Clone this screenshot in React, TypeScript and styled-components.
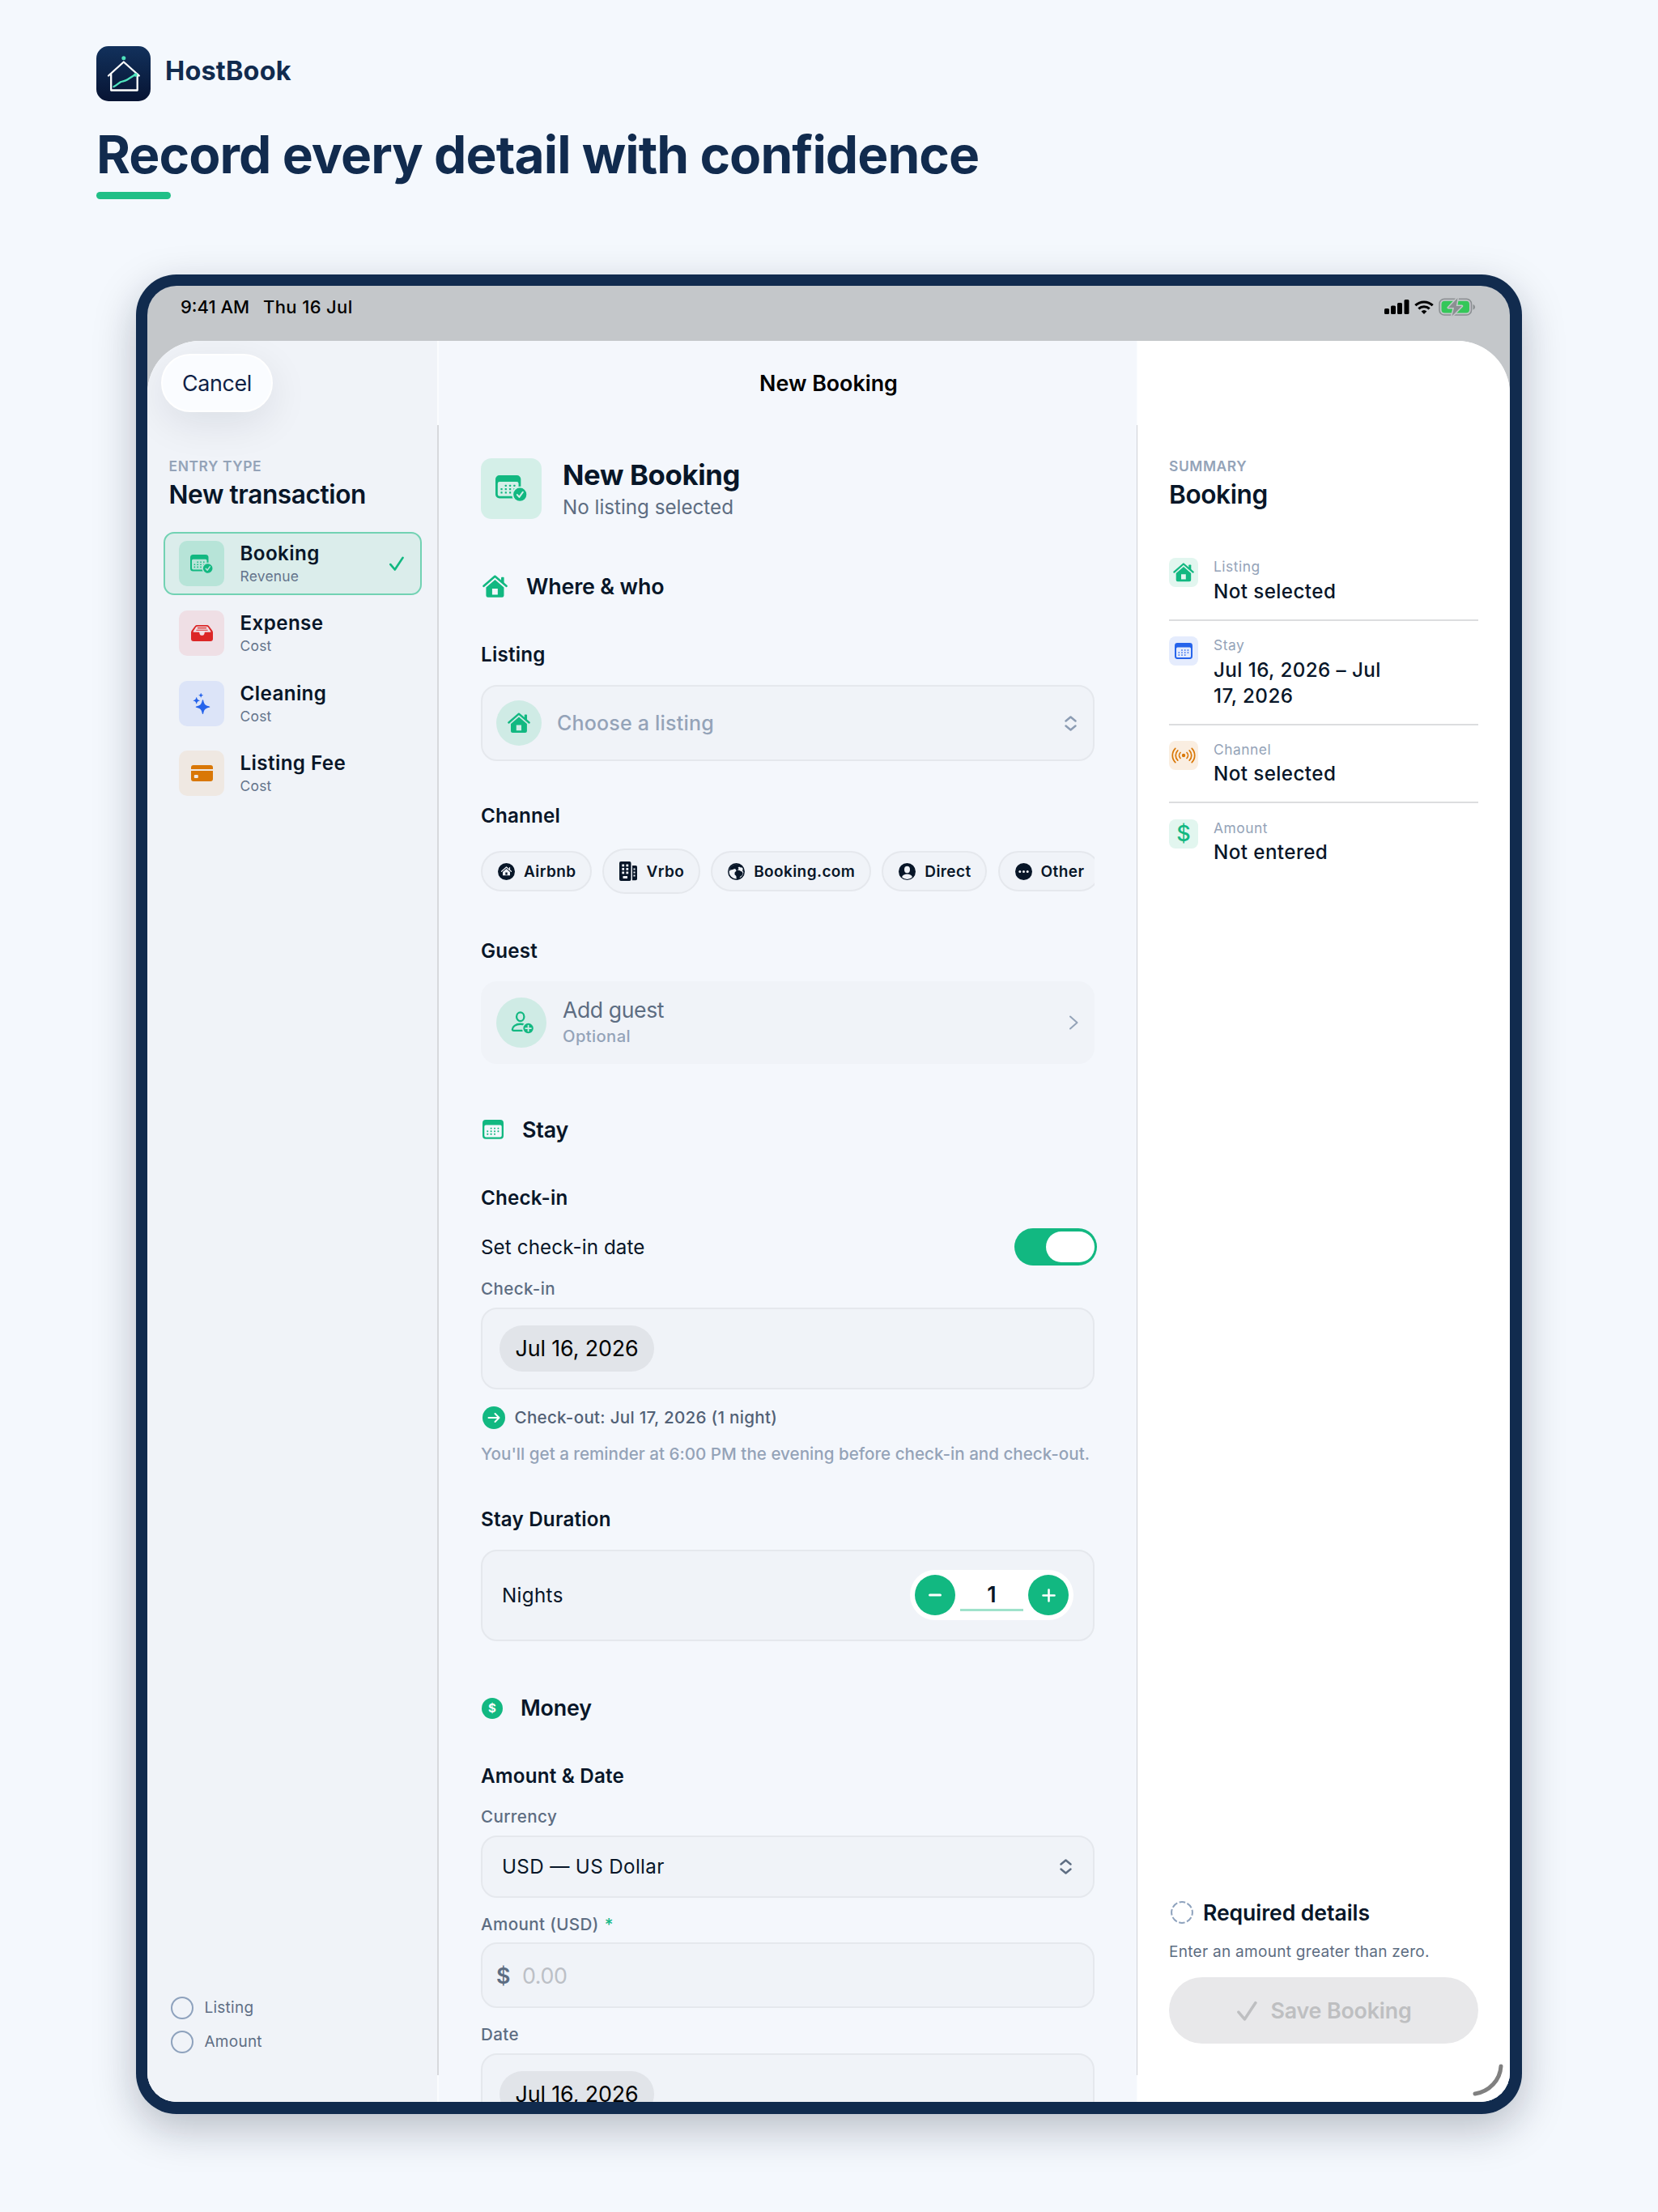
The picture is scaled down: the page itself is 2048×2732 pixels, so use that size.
import { useState } from 'react';
import styled, { createGlobalStyle } from 'styled-components';

const GlobalStyle = createGlobalStyle`
  * {
    box-sizing: border-box;
  }

  body {
    margin: 0;
    background: #f4f8fd;
    color: #081628;
    font-family: Inter, "Liberation Sans", sans-serif;
  }

  svg {
    display: block;
    flex-shrink: 0;
  }
`;

const Page = styled.div`
  width: 2048px;
  height: 2732px;
  padding: 57px 168px 0 119px;
  overflow: hidden;
`;

const Brand = styled.div`
  display: flex;
  align-items: center;
  gap: 18px;
  height: 68px;
`;

const BrandName = styled.div`
  margin-bottom: 7px;
  font-size: 32.4px;
  font-weight: 700;
  line-height: 40px;
  letter-spacing: 0.2px;
  color: #112b4e;
`;

const Headline = styled.h1`
  margin: 26px 0 0;
  font-size: 64px;
  font-weight: 700;
  line-height: 80px;
  letter-spacing: -0.94px;
  color: #112b4e;
`;

const Underline = styled.div`
  width: 92px;
  height: 9px;
  margin-top: 6px;
  border-radius: 5px;
  background: #21bf87;
`;

const Device = styled.div`
  width: 1712px;
  height: 2272px;
  margin: 93px 0 0 49px;
  padding: 14px 15px 15px 14px;
  border-radius: 50px;
  background: #112b4e;
  box-shadow: 0 18px 52px rgba(10, 18, 40, 0.26);
`;

const Screen = styled.div`
  width: 1683px;
  height: 2243px;
  border-radius: 36px;
  overflow: hidden;
  background: #c4c7ca;
`;

const StatusBar = styled.div`
  display: flex;
  align-items: center;
  height: 68px;
  padding: 0 42px 16px 41px;
  font-size: 22px;
  font-weight: 500;
  line-height: 30px;
  color: #000;
`;

const StatusDate = styled.span`
  margin-left: 17px;
  letter-spacing: 0.35px;
`;

const StatusIcons = styled.div`
  display: flex;
  align-items: center;
  gap: 6px;
  margin-left: auto;
`;

const Sheet = styled.div`
  position: relative;
  display: flex;
  height: 2175px;
  border-radius: 65px 65px 0 0;
  overflow: hidden;
  background: #fff;
`;

const NavBar = styled.div`
  position: absolute;
  top: 0;
  left: 0;
  right: 0;
  display: grid;
  grid-template-columns: 1fr auto 1fr;
  align-items: center;
  height: 104px;
  padding: 0 17px;
`;

const CancelButton = styled.button`
  justify-self: start;
  width: 138px;
  height: 72px;
  border: 2px solid #fff;
  border-radius: 36px;
  background: #fafcff;
  box-shadow: 0 14px 50px rgba(15, 23, 42, 0.09);
  font-family: inherit;
  font-size: 26.8px;
  letter-spacing: -0.35px;
  color: #0f2246;
`;

const NavTitle = styled.div`
  font-size: 26.8px;
  font-weight: 600;
  line-height: 34px;
  letter-spacing: 0;
  color: #000;
`;

const Column = styled.div<{ $width: number; $background: string; $side: number }>`
  display: flex;
  flex-direction: column;
  width: ${(p) => p.$width}px;
  padding: 144px ${(p) => p.$side}px 0;
  background: ${(p) => p.$background};

  & > * {
    flex-shrink: 0;
  }
`;

const Divider = styled.div<{ $width: number; $color: string }>`
  width: ${(p) => p.$width}px;
  border: solid #fafcfe;
  border-width: 104px 0 33px;
  background: ${(p) => p.$color};
`;

const Eyebrow = styled.div`
  font-size: 17.4px;
  font-weight: 600;
  line-height: 22px;
  letter-spacing: 0.6px;
  color: #94a3b8;
`;

const ColumnTitle = styled.div`
  margin-top: 4px;
  font-size: 31.6px;
  font-weight: 600;
  line-height: 40px;
  letter-spacing: -0.4px;
`;

const SidebarHead = styled.div`
  padding-left: 6.5px;
`;

const EntryList = styled.div`
  display: flex;
  flex-direction: column;
  gap: 8.4px;
  margin: 26px -1px 0 0;
`;

const EntryRow = styled.button<{ $selected: boolean }>`
  display: flex;
  align-items: center;
  height: 78px;
  padding: 0 20px 0 17px;
  border: 2px solid ${(p) => (p.$selected ? '#72d2b3' : 'transparent')};
  border-radius: 13px;
  background: ${(p) => (p.$selected ? '#dbedeb' : 'transparent')};
  font-family: inherit;
  text-align: left;
  color: inherit;
`;

const EntryIcon = styled.div<{ $background: string }>`
  display: grid;
  place-items: center;
  width: 56px;
  height: 56px;
  margin-right: 19.5px;
  border-radius: 10px;
  background: ${(p) => p.$background};
`;

const EntryText = styled.div`
  flex: 1;
`;

const EntryName = styled.div`
  font-size: 24.2px;
  font-weight: 600;
  line-height: 31px;
  letter-spacing: 0.4px;
`;

const EntryKind = styled.div`
  margin-top: 1px;
  font-size: 17.4px;
  line-height: 24px;
  letter-spacing: 0.25px;
  color: #64748b;
`;

const Checklist = styled.div`
  display: flex;
  flex-direction: column;
  gap: 14px;
  margin: auto 0 60px;
  padding-left: 8.5px;
`;

const ChecklistItem = styled.div`
  display: flex;
  align-items: center;
  gap: 14px;
  font-size: 19px;
  line-height: 28px;
  letter-spacing: 0.25px;
  color: #5f6f85;
`;

const OpenCircle = styled.div`
  width: 28px;
  height: 28px;
  border: 2px solid #8ea2bd;
  border-radius: 50%;
`;

const Hero = styled.div`
  display: flex;
  align-items: center;
  gap: 26px;
  height: 75px;
  margin-top: 1px;
`;

const HeroIcon = styled.div`
  display: grid;
  place-items: center;
  width: 75px;
  height: 75px;
  border-radius: 13px;
  background: #d4efe8;
`;

const HeroTitle = styled.div`
  margin-top: -2px;
  font-size: 34.7px;
  font-weight: 700;
  line-height: 44px;
  letter-spacing: -0.35px;
`;

const HeroSubtitle = styled.div`
  margin-top: 4px;
  font-size: 24.2px;
  line-height: 30px;
  letter-spacing: 0;
  color: #5d6d82;
`;

const SectionTitle = styled.div<{ $top: number }>`
  display: flex;
  align-items: center;
  gap: 23px;
  margin-top: ${(p) => p.$top}px;
  padding-left: 2px;
  font-size: 26.8px;
  font-weight: 600;
  line-height: 32px;
  letter-spacing: -0.15px;
`;

const GroupTitle = styled.div<{ $top?: number }>`
  margin-top: ${(p) => p.$top ?? 54}px;
  font-size: 24.2px;
  font-weight: 600;
  line-height: 30px;
  letter-spacing: 0.2px;
`;

const FieldLabel = styled.div<{ $top: number }>`
  margin: ${(p) => p.$top}px 0 9.5px;
  font-size: 20.6px;
  font-weight: 500;
  line-height: 26px;
  letter-spacing: 0.38px;
  color: #5d6d82;
`;

const Required = styled.span`
  margin-left: 7px;
  color: #12b886;
`;

const Field = styled.div<{ $height: number; $top?: number; $left?: number; $right?: number }>`
  display: flex;
  align-items: center;
  height: ${(p) => p.$height}px;
  margin-top: ${(p) => p.$top ?? 0}px;
  padding: 0 ${(p) => p.$right ?? 24}px 0 ${(p) => p.$left ?? 24}px;
  border: 2px solid #e5e8ed;
  border-radius: 20px;
  background: #f0f3f8;
  font-size: 24.2px;
  letter-spacing: 0.35px;
`;

const GuestField = styled(Field)`
  border-color: #f0f3f8;
`;

const RoundIcon = styled.div<{ $size: number }>`
  display: grid;
  place-items: center;
  flex-shrink: 0;
  width: ${(p) => p.$size}px;
  height: ${(p) => p.$size}px;
  border-radius: 50%;
  background: #cfebe5;
`;

const Placeholder = styled.div`
  flex: 1;
  margin-left: 19px;
  font-size: 25px;
  font-weight: 500;
  letter-spacing: 0.2px;
  color: #94a3b8;
`;

const FieldValue = styled.div`
  flex: 1;
`;

const ChipRow = styled.div`
  display: flex;
  align-items: center;
  gap: 13.5px;
  height: 56px;
  margin-top: 25px;
  overflow: hidden;
`;

const Chip = styled.button<{ $tall?: boolean }>`
  display: flex;
  align-items: center;
  flex-shrink: 0;
  gap: 11px;
  height: ${(p) => (p.$tall ? 56 : 50)}px;
  padding: 0 17.5px 0 19px;
  border: 2px solid #e5e8ed;
  border-radius: 28px;
  background: #f0f3f8;
  font-family: inherit;
  font-size: 19px;
  font-weight: 600;
  letter-spacing: 0.4px;
  color: #081628;
`;

const GuestText = styled.div`
  flex: 1;
  margin-left: 20px;
`;

const GuestTitle = styled.div`
  font-size: 26.6px;
  line-height: 33px;
  letter-spacing: -0.4px;
  color: #5d6d82;
`;

const GuestHint = styled.div`
  margin-top: 1px;
  font-size: 20.2px;
  font-weight: 500;
  line-height: 30px;
  letter-spacing: 0.4px;
  color: #94a3b8;
`;

const ToggleRow = styled.div`
  display: flex;
  align-items: center;
  justify-content: space-between;
  height: 46px;
  margin: 22px -3px 0 0;
  font-size: 24.2px;
  letter-spacing: 0.1px;
`;

const Toggle = styled.button<{ $on: boolean }>`
  display: flex;
  justify-content: ${(p) => (p.$on ? 'flex-end' : 'flex-start')};
  width: 102px;
  height: 46px;
  padding: 4px 3px;
  border: 0;
  border-radius: 23px;
  background: ${(p) => (p.$on ? '#12b881' : '#d5d8dd')};
`;

const ToggleKnob = styled.span`
  width: 60px;
  height: 38px;
  border-radius: 19px;
  background: #fff;
`;

const DatePill = styled.div`
  height: 57px;
  padding: 0 19px 0 20px;
  border-radius: 29px;
  background: #e1e4e9;
  font-size: 26.8px;
  line-height: 57px;
  letter-spacing: -0.1px;
  color: #000;
`;

const CheckoutNote = styled.div`
  display: flex;
  align-items: center;
  gap: 12px;
  height: 28px;
  margin-top: 21px;
  padding-left: 1.5px;
  font-size: 20.6px;
  font-weight: 500;
  letter-spacing: 0.28px;
  color: #526176;
`;

const Reminder = styled.div`
  margin-top: 18px;
  font-size: 20.6px;
  font-weight: 500;
  line-height: 26px;
  letter-spacing: 0.01px;
  white-space: nowrap;
  color: #94a3b8;
`;

const Stepper = styled.div`
  display: flex;
  align-items: center;
  justify-content: space-between;
  width: 202px;
  height: 62px;
  padding: 0 6px;
  border-radius: 31px;
  background: #fff;
`;

const StepButton = styled.button`
  display: grid;
  place-items: center;
  width: 50px;
  height: 50px;
  padding: 0;
  border: 0;
  border-radius: 50%;
  background: #12b881;
`;

const StepValue = styled.div`
  width: 78px;
  height: 40px;
  border-bottom: 3px solid #9fe2cb;
  font-size: 26.8px;
  font-weight: 600;
  line-height: 38px;
  text-align: center;
`;

const CurrencySign = styled.span`
  width: 32px;
  font-size: 26.8px;
  font-weight: 600;
  color: #5d6d82;
`;

const AmountPlaceholder = styled.span`
  font-size: 26.8px;
  letter-spacing: -0.4px;
  color: #bcc0c6;
`;

const SummaryList = styled.div`
  margin-top: 39px;
`;

const SummaryItem = styled.div`
  display: flex;
  align-items: flex-start;
  padding: 19.4px 0 18px;

  & + & {
    border-top: 2px solid #dcdddf;
  }
`;

const SummaryIcon = styled.div<{ $background: string; $color: string }>`
  display: grid;
  place-items: center;
  width: 36px;
  height: 36px;
  margin-right: 19px;
  border-radius: 8px;
  background: ${(p) => p.$background};
  color: ${(p) => p.$color};
  font-size: 27px;
  font-weight: 500;
  line-height: 36px;
`;

const SummaryLabel = styled.div`
  font-size: 17.4px;
  line-height: 22px;
  letter-spacing: 0.5px;
  color: #94a3b8;
`;

const SummaryValue = styled.div`
  max-width: 230px;
  margin-top: 3.4px;
  font-size: 24.2px;
  font-weight: 500;
  line-height: 32px;
  letter-spacing: 0.42px;
`;

const SummaryFooter = styled.div`
  margin: auto 0 72px;
`;

const RequiredTitle = styled.div`
  display: flex;
  align-items: center;
  gap: 12px;
  padding-left: 2px;
  font-size: 26.6px;
  font-weight: 600;
  line-height: 32px;
  letter-spacing: -0.08px;
`;

const RequiredHint = styled.div`
  margin-top: 20px;
  font-size: 19px;
  line-height: 26px;
  letter-spacing: 0.29px;
  color: #5d6d82;
`;

const SaveButton = styled.button`
  display: flex;
  align-items: center;
  justify-content: center;
  gap: 16px;
  width: 382px;
  height: 82px;
  margin-top: 18px;
  padding: 0 0 0 2px;
  border: 0;
  border-radius: 41px;
  background: #e8e8ea;
  font-family: inherit;
  font-size: 26.8px;
  font-weight: 600;
  letter-spacing: -0.15px;
  color: #bebfc1;
`;

const ResizeHandle = styled.svg`
  position: absolute;
  right: 7px;
  bottom: 7px;
`;

const DollarCircle = styled.span`
  display: grid;
  place-items: center;
  width: 26px;
  height: 26px;
  margin: 2px -1px 0 -1px;
  border-radius: 50%;
  background: #12b881;
  font-size: 15px;
  font-weight: 700;
  line-height: 26px;
  letter-spacing: 0;
  color: #fff;
`;

const green = '#12b881';
const dark = '#081628';

const LogoIcon = () => (
  <svg width="67" height="68" viewBox="0 0 67 68" fill="none">
    <defs>
      <linearGradient id="logo-bg" x1="0" y1="0" x2="0" y2="1">
        <stop offset="0" stopColor="#12315c" />
        <stop offset="1" stopColor="#071433" />
      </linearGradient>
    </defs>
    <rect width="67" height="68" rx="15" fill="url(#logo-bg)" />
    <path d="M15 36.500 33.800 19.500 52.800 36.500M18.200 34.500v20h32.500v-20" stroke="#fff" strokeWidth="2.300" strokeLinejoin="round" strokeLinecap="round" />
    <path d="M21.500 50c4-2 6-4.500 9-6 3-1 5-.8 8-2.800 4-2.500 6-4 10-6.500" stroke="#4fe3bd" strokeWidth="2.300" strokeLinecap="round" />
    <circle cx="33.800" cy="14.800" r="2.500" fill="#4fe3bd" />
    <circle cx="48.500" cy="35.500" r="2.200" fill="#4fe3bd" />
  </svg>
);

const HouseIcon = ({ width = 26, color = green }: { width?: number; color?: string }) => (
  <svg width={width} height={(width * 24) / 26} viewBox="0 0 26 24" fill="none">
    <path d="M1.300 11.600 12.900 1.500l11.800 10.100" stroke={color} strokeWidth="2.200" strokeLinecap="round" strokeLinejoin="round" />
    <path d="M19.300 3.200a.8.8 0 0 1 .8-.8h1.400a.8.8 0 0 1 .8.8v6l-3-2.500z" fill={color} />
    <path
      fillRule="evenodd"
      d="M13 5l9.200 8v8.300a2 2 0 0 1-2 2H5.700a2 2 0 0 1-2-2V13zM10 14.300v6.300h5.800v-6.300z"
      fill={color}
    />
  </svg>
);

const calendarDots = [
  [9.2, 9.2], [13, 9.2], [16.8, 9.2],
  [5.4, 12.3], [9.2, 12.3], [13, 12.3], [16.8, 12.3],
  [5.4, 15.4], [9.2, 15.4], [13, 15.4],
];

const CalendarShape = ({ color }: { color: string }) => (
  <>
    <path
      fillRule="evenodd"
      d="M3.500 0h15.500a3.500 3.500 0 0 1 3.500 3.500v13.500a3.500 3.500 0 0 1-3.500 3.500H3.500a3.500 3.500 0 0 1-3.500-3.500V3.500A3.500 3.500 0 0 1 3.500 0zM3.600 5.700a1.600 1.600 0 0 0-1.600 1.600v9.500a1.700 1.700 0 0 0 1.700 1.700h15.100a1.700 1.700 0 0 0 1.700-1.700V7.300a1.600 1.600 0 0 0-1.600-1.600z"
      fill={color}
    />
    {calendarDots.map(([x, y]) => (
      <rect key={`${x}-${y}`} x={x - 0.8} y={y - 0.8} width="1.600" height="1.600" rx="0.400" fill={color} />
    ))}
  </>
);

const CalendarIcon = ({ width = 22, color = green }: { width?: number; color?: string }) => (
  <svg width={width} height={(width * 20.5) / 22.5} viewBox="0 0 22.5 20.5">
    <CalendarShape color={color} />
  </svg>
);

const CalendarCheckIcon = ({ width, background }: { width: number; background: string }) => (
  <svg width={width} height={(width * 23) / 28} viewBox="0 0 28 23">
    <CalendarShape color={green} />
    <circle cx="21.700" cy="17" r="7.200" fill={background} />
    <circle cx="21.700" cy="17" r="5.800" fill={green} />
    <path d="m19.300 17.300 1.800 2 3.200-4.400" fill="none" stroke={background} strokeWidth="1.500" strokeLinecap="round" strokeLinejoin="round" />
  </svg>
);

const TrayIcon = () => (
  <svg width="27" height="20" viewBox="0 0 27 20">
    <path
      fillRule="evenodd"
      fill="#dc2626"
      d="M7.500 0h12a3.500 3.500 0 0 1 2.800 1.400l3.900 5.400a4 4 0 0 1 .8 2.400V17a3 3 0 0 1-3 3H3a3 3 0 0 1-3-3V9.200a4 4 0 0 1 .8-2.400l3.900-5.400A3.500 3.500 0 0 1 7.500 0zM7.700 1.700c-.7 0-1.200.3-1.600.8L2.700 7.700c-.3.6 0 1.100.6 1.100h6.200c.5 0 .9.400.9.900a3.100 3.100 0 0 0 6.200 0c0-.5.4-.9.9-.9h6.200c.6 0 .9-.5.6-1.100l-3.400-5.200c-.4-.5-.9-.8-1.600-.8z"
    />
    <path d="M8.300 3.600h10.400M6.800 6.300h13.400" stroke="#dc2626" strokeWidth="1.100" strokeLinecap="round" />
  </svg>
);

const SparklesIcon = () => (
  <svg width="22" height="26" viewBox="0 0 22 26" fill="#2563eb">
    <path d="M12.500 8.300c.4 0 .6.300.7.700 1 5 2.400 6.400 7.400 7.400.5.100.7.300.7.700s-.2.600-.7.700c-5 1-6.400 2.400-7.400 7.400-.1.400-.3.700-.7.700s-.6-.3-.7-.7c-1-5-2.400-6.400-7.400-7.400-.4-.1-.7-.3-.7-.7s.3-.6.700-.7c5-1 6.400-2.400 7.400-7.400.1-.4.300-.7.700-.7z" />
    <path d="M4.700 5.200c.3 0 .4.200.4.400.4 2.200 1 2.800 3.200 3.300.2 0 .4.200.4.400s-.2.400-.4.400c-2.200.4-2.800 1-3.200 3.200 0 .2-.1.400-.4.400s-.4-.2-.4-.4c-.4-2.200-1-2.800-3.200-3.200-.2 0-.4-.2-.4-.4s.2-.4.400-.4c2.200-.5 2.800-1.100 3.200-3.300 0-.2.100-.4.400-.4z" />
    <path d="M10.200 0c.2 0 .3.100.3.300.3 1.500.7 1.900 2.200 2.200.2 0 .3.200.3.300s-.1.300-.3.300c-1.500.3-1.900.7-2.200 2.200 0 .2-.1.300-.3.300s-.3-.1-.3-.3C9.600 3.800 9.200 3.400 7.700 3.100c-.2 0-.3-.1-.3-.3s.1-.3.300-.3c1.500-.3 1.900-.7 2.200-2.200 0-.2.100-.3.300-.3z" />
  </svg>
);

const CardIcon = () => (
  <svg width="27" height="20" viewBox="0 0 27 20" fill="#d97706">
    <path d="M3 0h21a3 3 0 0 1 3 3v2H0V3a3 3 0 0 1 3-3z" />
    <path fillRule="evenodd" d="M0 7h27v10a3 3 0 0 1-3 3H3a3 3 0 0 1-3-3zM4.800 12a1 1 0 0 0-1 1v2a1 1 0 0 0 1 1h3a1 1 0 0 0 1-1v-2a1 1 0 0 0-1-1z" />
  </svg>
);

const CheckIcon = ({ width, color, stroke }: { width: number; color: string; stroke: number }) => (
  <svg width={width} height={width} viewBox="0 0 24 24" fill="none">
    <path d="M1.800 13.500 9 22 22 2.500" stroke={color} strokeWidth={stroke} strokeLinecap="round" strokeLinejoin="round" />
  </svg>
);

const SortIcon = ({ color }: { color: string }) => (
  <svg width="15" height="19" viewBox="0 0 15 19" fill="none" stroke={color} strokeWidth="2.400" strokeLinecap="round" strokeLinejoin="round">
    <path d="m1.500 6.500 6-5 6 5M1.500 12.500l6 5 6-5" />
  </svg>
);

const ChevronIcon = () => (
  <svg width="12" height="18" viewBox="0 0 12 18" fill="none">
    <path d="m2 1.500 8.500 7.500L2 16.500" stroke="#94a3b8" strokeWidth="2" strokeLinecap="round" strokeLinejoin="round" />
  </svg>
);

const PersonAddIcon = () => (
  <svg width="29" height="28" viewBox="-1.5 0 28 27" fill="none" stroke={green} strokeWidth="2.200">
    <ellipse cx="10.800" cy="6.500" rx="4.500" ry="5.200" />
    <path d="M15.500 16.200C14 15.500 12.500 15.200 10.800 15.200 5 15.200 1.300 18.700 1.300 21.500c0 1 .6 1.500 1.700 1.500h10" strokeLinecap="round" />
    <circle cx="20.300" cy="20.300" r="7.400" fill="#cfebe5" stroke="none" />
    <circle cx="20.300" cy="20.300" r="6" fill={green} stroke="none" />
    <path d="M20.300 17v6.600M17 20.300h6.600" stroke="#cfebe5" strokeWidth="1.700" strokeLinecap="round" />
  </svg>
);

const ArrowCircleIcon = () => (
  <svg width="28" height="28" viewBox="0 0 28 28" fill="none">
    <circle cx="14" cy="14" r="14" fill={green} />
    <path d="M7.500 14h13M15.500 9l5 5-5 5" stroke="#fff" strokeWidth="2" strokeLinecap="round" strokeLinejoin="round" />
  </svg>
);

const WavesIcon = () => (
  <svg width="30" height="20" viewBox="0 0 30 20" fill="none" stroke="#d97706" strokeWidth="1.700" strokeLinecap="round">
    <circle cx="15" cy="10" r="2.200" fill="#d97706" stroke="none" />
    <path d="M11 6.500a5 5 0 0 0 0 7M7.800 3.800a8.800 8.800 0 0 0 0 12.400M4.800 1.300a12.500 12.500 0 0 0 0 17.400" />
    <path d="M19 6.500a5 5 0 0 1 0 7M22.200 3.800a8.800 8.800 0 0 1 0 12.400M25.200 1.300a12.500 12.500 0 0 1 0 17.400" />
  </svg>
);

const AirbnbIcon = () => (
  <svg width="21" height="21" viewBox="0 0 21 21" fill="none">
    <circle cx="10.500" cy="10.500" r="10.500" fill={dark} />
    <path d="m4.500 10.300 6-5.300 6 5.300M14.500 5.500v2.500" stroke="#f0f3f8" strokeWidth="1.200" strokeLinecap="round" strokeLinejoin="round" />
    <path fillRule="evenodd" d="m10.500 7 4.500 4v4.300H6V11zM9.300 11.500v3h2.400v-3z" fill="#f0f3f8" />
  </svg>
);

const BuildingIcon = () => (
  <svg width="22" height="24" viewBox="0 0 22 24" fill={dark}>
    <path d="M16 5h4.200A1.800 1.800 0 0 1 22 6.800v14.700a1.800 1.800 0 0 1-1.800 1.800H16z" />
    <rect width="14.500" height="24" rx="2" />
    <g fill="#f0f3f8">
      <rect x="3.300" y="3.500" width="2.800" height="2.800" />
      <rect x="8.400" y="3.500" width="2.800" height="2.800" />
      <rect x="3.300" y="8" width="2.800" height="2.800" />
      <rect x="8.400" y="8" width="2.800" height="2.800" />
      <rect x="3.300" y="12.500" width="2.800" height="2.800" />
      <rect x="8.400" y="12.500" width="2.800" height="2.800" />
      <rect x="4.500" y="18" width="5.500" height="3" />
      <rect x="17.500" y="8.500" width="2" height="2" />
      <rect x="17.500" y="12.500" width="2" height="2" />
      <rect x="17.500" y="16.500" width="2" height="2" />
    </g>
  </svg>
);

const GlobeIcon = () => (
  <svg width="21" height="21" viewBox="0 0 21 21">
    <circle cx="10.500" cy="10.500" r="9.700" fill="none" stroke={dark} strokeWidth="1.500" />
    <path d="M2.500 6.500C4 3.500 7.500 1.200 11 1.200c3.500 0 6 1.500 7.500 4l-2.500.3-2-1-1.500 1.200 1.200 1.600-2 1.200 2.500.6 3.500 1.700 1 2-1.200 2.500-2.300 1.500-1 2.700-2 1.200-1.500-1.200-.3-3.500-2-2 .3-2.800 1.800-1.500-.5-2-1.700-.8L6 8 3.500 8.500 2 10z" fill={dark} />
    <path d="M18 7.500l1.800 1.500.2 2.500-1.500-1.200z" fill={dark} />
  </svg>
);

const PersonCircleIcon = () => (
  <svg width="21" height="21" viewBox="0 0 21 21">
    <circle cx="10.500" cy="10.500" r="10.500" fill={dark} />
    <ellipse cx="10.500" cy="8" rx="3.500" ry="4.200" fill="#f0f3f8" />
    <path d="M4 17.200c1-2.500 3.500-3.700 6.500-3.700s5.500 1.200 6.500 3.700a9 9 0 0 1-13 0z" fill="#f0f3f8" />
  </svg>
);

const EllipsisIcon = () => (
  <svg width="21" height="21" viewBox="0 0 21 21">
    <circle cx="10.500" cy="10.500" r="10.500" fill={dark} />
    <g fill="#f0f3f8">
      <circle cx="5.800" cy="10.500" r="1.500" />
      <circle cx="10.500" cy="10.500" r="1.500" />
      <circle cx="15.200" cy="10.500" r="1.500" />
    </g>
  </svg>
);

const SignalIcon = () => (
  <svg width="31" height="18" viewBox="0 0 31 18">
    <rect x="0" y="11" width="6" height="7" rx="1.500" />
    <rect x="8" y="7.500" width="6" height="10.500" rx="1.500" />
    <rect x="16" y="4" width="6" height="14" rx="1.500" />
    <rect x="24.500" y="0" width="6" height="18" rx="1.500" />
  </svg>
);

const WifiIcon = () => (
  <svg width="24" height="17" viewBox="0 0 24 17" fill="none" stroke="#000" strokeWidth="3">
    <path d="M1.300 6.200a15.500 15.500 0 0 1 21.400 0M5.300 10.300a9.800 9.800 0 0 1 13.400 0" />
    <path d="M12 17 8.600 13.500a5 5 0 0 1 6.800 0z" fill="#000" stroke="none" />
  </svg>
);

const BatteryIcon = () => (
  <svg width="46" height="24" viewBox="0 0 46 24">
    <rect x="1" y="2.300" width="39.500" height="19.700" rx="6" fill="none" stroke="#8b8f92" strokeWidth="1.600" />
    <path d="M42.500 9v6.500c1.700-.5 2.500-1.700 2.500-3.200s-.8-2.800-2.500-3.300z" fill="#8b8f92" />
    <rect x="3.500" y="4.800" width="34.500" height="14.700" rx="4" fill="#34c759" />
    <path d="m23.500 1-11.500 12h7l-2.500 10.500L28.800 11h-7z" fill="#8b8f92" stroke="#c4c7ca" strokeWidth="3" strokeLinejoin="round" paintOrder="stroke" />
  </svg>
);

const DashedCircleIcon = () => (
  <svg width="28" height="28" viewBox="0 0 28 28">
    <circle cx="14" cy="14" r="12.900" fill="none" stroke="#8ea2bd" strokeWidth="2" strokeDasharray="7.600 2.530" strokeDashoffset="3.800" />
  </svg>
);

const entries = [
  { name: 'Booking', kind: 'Revenue', background: '#b7e4d8', icon: <CalendarCheckIcon width={28} background="#b7e4d8" /> },
  { name: 'Expense', kind: 'Cost', background: '#efdfe5', icon: <TrayIcon /> },
  { name: 'Cleaning', kind: 'Cost', background: '#dce4f8', icon: <SparklesIcon /> },
  { name: 'Listing Fee', kind: 'Cost', background: '#efe8e2', icon: <CardIcon /> },
];

const channels = [
  { name: 'Airbnb', icon: <AirbnbIcon /> },
  { name: 'Vrbo', icon: <BuildingIcon />, tall: true },
  { name: 'Booking.com', icon: <GlobeIcon /> },
  { name: 'Direct', icon: <PersonCircleIcon /> },
  { name: 'Other', icon: <EllipsisIcon /> },
];

const summary = [
  { label: 'Listing', value: 'Not selected', background: '#e2f6ef', color: green, icon: <HouseIcon /> },
  { label: 'Stay', value: 'Jul 16, 2026 – Jul 17, 2026', background: '#e5ecfd', color: '#2563eb', icon: <CalendarIcon color="#2563eb" /> },
  { label: 'Channel', value: 'Not selected', background: '#faeee1', color: '#d97706', icon: <WavesIcon /> },
  { label: 'Amount', value: 'Not entered', background: '#e2f6ef', color: green, icon: '$' },
];

export default function App() {
  const [entry, setEntry] = useState('Booking');
  const [hasCheckIn, setHasCheckIn] = useState(true);
  const [nights, setNights] = useState(1);

  return (
    <Page>
      <GlobalStyle />
      <Brand>
        <LogoIcon />
        <BrandName>HostBook</BrandName>
      </Brand>
      <Headline>Record every detail with confidence</Headline>
      <Underline />

      <Device>
        <Screen>
          <StatusBar>
            <span>9:41 AM</span>
            <StatusDate>Thu 16 Jul</StatusDate>
            <StatusIcons>
              <SignalIcon />
              <WifiIcon />
              <BatteryIcon />
            </StatusIcons>
          </StatusBar>

          <Sheet>
            <Column $width={358} $background="#f0f3f8" $side={20}>
              <SidebarHead>
                <Eyebrow>ENTRY TYPE</Eyebrow>
                <ColumnTitle>New transaction</ColumnTitle>
              </SidebarHead>
              <EntryList>
                {entries.map((item) => (
                  <EntryRow key={item.name} $selected={item.name === entry} onClick={() => setEntry(item.name)}>
                    <EntryIcon $background={item.background}>{item.icon}</EntryIcon>
                    <EntryText>
                      <EntryName>{item.name}</EntryName>
                      <EntryKind>{item.kind}</EntryKind>
                    </EntryText>
                    {item.name === entry && <CheckIcon width={18} color={green} stroke={3.6} />}
                  </EntryRow>
                ))}
              </EntryList>
              <Checklist>
                <ChecklistItem>
                  <OpenCircle />
                  Listing
                </ChecklistItem>
                <ChecklistItem>
                  <OpenCircle />
                  Amount
                </ChecklistItem>
              </Checklist>
            </Column>

            <Divider $width={2} $color="#d7d9dd" />

            <Column $width={862} $background="#f4f7fc" $side={52}>
              <Hero>
                <HeroIcon>
                  <CalendarCheckIcon width={39} background="#d4efe8" />
                </HeroIcon>
                <div>
                  <HeroTitle>New Booking</HeroTitle>
                  <HeroSubtitle>No listing selected</HeroSubtitle>
                </div>
              </Hero>

              <SectionTitle $top={67}>
                <HouseIcon width={31} />
                Where & who
              </SectionTitle>

              <GroupTitle>Listing</GroupTitle>
              <Field $height={94} $top={22} $left={17} $right={20}>
                <RoundIcon $size={56}>
                  <HouseIcon width={28} />
                </RoundIcon>
                <Placeholder>Choose a listing</Placeholder>
                <SortIcon color="#8c9cb3" />
              </Field>

              <GroupTitle $top={53}>Channel</GroupTitle>
              <ChipRow>
                {channels.map((channel) => (
                  <Chip key={channel.name} $tall={channel.tall}>
                    {channel.icon}
                    {channel.name}
                  </Chip>
                ))}
              </ChipRow>

              <GroupTitle $top={56}>Guest</GroupTitle>
              <GuestField $height={102} $top={22} $left={17} $right={18}>
                <RoundIcon $size={62}>
                  <PersonAddIcon />
                </RoundIcon>
                <GuestText>
                  <GuestTitle>Add guest</GuestTitle>
                  <GuestHint>Optional</GuestHint>
                </GuestText>
                <ChevronIcon />
              </GuestField>

              <SectionTitle $top={65}>
                <CalendarIcon width={26} />
                Stay
              </SectionTitle>

              <GroupTitle>Check-in</GroupTitle>
              <ToggleRow>
                Set check-in date
                <Toggle $on={hasCheckIn} onClick={() => setHasCheckIn(!hasCheckIn)}>
                  <ToggleKnob />
                </Toggle>
              </ToggleRow>
              <FieldLabel $top={16}>Check-in</FieldLabel>
              <Field $height={101} $left={20.5}>
                <DatePill>Jul 16, 2026</DatePill>
              </Field>
              <CheckoutNote>
                <ArrowCircleIcon />
                Check-out: Jul 17, 2026 (1 night)
              </CheckoutNote>
              <Reminder>You'll get a reminder at 6:00 PM the evening before check-in and check-out.</Reminder>

              <GroupTitle $top={53}>Stay Duration</GroupTitle>
              <Field $height={113} $top={22}>
                <FieldValue>Nights</FieldValue>
                <Stepper>
                  <StepButton onClick={() => setNights(Math.max(1, nights - 1))}>
                    <svg width="16" height="16" viewBox="0 0 16 16">
                      <path d="M1.500 8h13" stroke="#fff" strokeWidth="3" strokeLinecap="round" />
                    </svg>
                  </StepButton>
                  <StepValue>{nights}</StepValue>
                  <StepButton onClick={() => setNights(nights + 1)}>
                    <svg width="17" height="17" viewBox="0 0 17 17">
                      <path d="M1.500 8.500h14M8.500 1.500v14" stroke="#fff" strokeWidth="2.600" strokeLinecap="round" />
                    </svg>
                  </StepButton>
                </Stepper>
              </Field>

              <SectionTitle $top={66}>
                <DollarCircle>$</DollarCircle>
                Money
              </SectionTitle>

              <GroupTitle>Amount & Date</GroupTitle>
              <FieldLabel $top={22.5}>Currency</FieldLabel>
              <Field $height={77} $right={26}>
                <FieldValue>USD — US Dollar</FieldValue>
                <SortIcon color="#5d6d82" />
              </Field>
              <FieldLabel $top={20}>
                Amount (USD)
                <Required>*</Required>
              </FieldLabel>
              <Field $height={81} $left={17}>
                <CurrencySign>$</CurrencySign>
                <AmountPlaceholder>0.00</AmountPlaceholder>
              </Field>
              <FieldLabel $top={20}>Date</FieldLabel>
              <Field $height={102} $left={20.5}>
                <DatePill>Jul 16, 2026</DatePill>
              </Field>
            </Column>

            <Divider $width={1} $color="#cfd2d7" />

            <Column $width={460} $background="#fff" $side={39}>
              <Eyebrow>SUMMARY</Eyebrow>
              <ColumnTitle>Booking</ColumnTitle>
              <SummaryList>
                {summary.map((item) => (
                  <SummaryItem key={item.label}>
                    <SummaryIcon $background={item.background} $color={item.color}>
                      {item.icon}
                    </SummaryIcon>
                    <div>
                      <SummaryLabel>{item.label}</SummaryLabel>
                      <SummaryValue>{item.value}</SummaryValue>
                    </div>
                  </SummaryItem>
                ))}
              </SummaryList>
              <SummaryFooter>
                <RequiredTitle>
                  <DashedCircleIcon />
                  Required details
                </RequiredTitle>
                <RequiredHint>Enter an amount greater than zero.</RequiredHint>
                <SaveButton disabled>
                  <CheckIcon width={25} color="#bebfc1" stroke={3.4} />
                  Save Booking
                </SaveButton>
              </SummaryFooter>
            </Column>

            <NavBar>
              <CancelButton>Cancel</CancelButton>
              <NavTitle>New Booking</NavTitle>
            </NavBar>

            <ResizeHandle width="40" height="40" viewBox="0 0 40 40">
              <path d="M36 3c-1 17-14 31-32 34" fill="none" stroke="#808080" strokeWidth="5" strokeLinecap="round" />
            </ResizeHandle>
          </Sheet>
        </Screen>
      </Device>
    </Page>
  );
}
